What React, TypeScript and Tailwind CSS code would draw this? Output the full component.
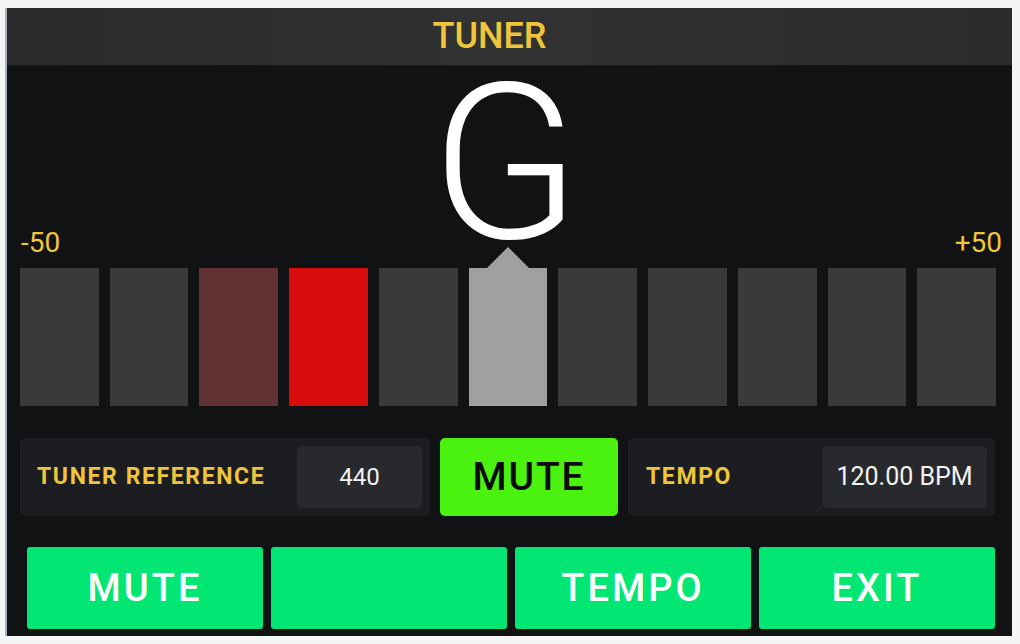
import React from "react";

const bars = [
  "bg-[#3a3a3c]",
  "bg-[#3a3a3c]",
  "bg-[#623133]",
  "bg-[#d90d0b]",
  "bg-[#3a3a3c]",
  "bg-[#a0a0a0]",
  "bg-[#3a3a3c]",
  "bg-[#3a3a3c]",
  "bg-[#3a3a3c]",
  "bg-[#3a3a3c]",
  "bg-[#3a3a3c]",
];

export default function App() {
  return (
    <div
      className="w-[1020px] h-[644px] bg-[#f4f5f7] overflow-hidden"
      style={{ fontFamily: "Roboto, 'Noto Sans', sans-serif" }}
    >
      <div className="ml-[5px] mt-[8px] w-[1007px] h-[628px] bg-[#111214] border-l-2 border-[#a9b3bf] flex flex-col">
        {/* Header */}
        <div className="h-[58px] shrink-0 flex items-center justify-center bg-gradient-to-r from-[#2a2a2a] via-[#323232] to-[#2b2b2b] border-b border-[#1a1a1a]">
          <span className="text-[36px] leading-none font-medium text-[#efc53c] mr-[40px] mt-[-1px]">
            TUNER
          </span>
        </div>

        {/* Note */}
        <div className="h-[163px] shrink-0 flex justify-center">
          <div className="text-[218px] leading-[0.75] h-[164px] font-light text-white mt-[16px] mr-[8px] relative z-10">
            G
          </div>
        </div>

        {/* Labels */}
        <div className="h-[27px] shrink-0 flex justify-between pl-[14px] pr-[10px] text-[28px] leading-none text-[#efc53c]">
          <span>-50</span>
          <span>+50</span>
        </div>

        {/* Bars */}
        <div className="mt-[12px] ml-[13px] w-[976px] h-[138px] grid grid-cols-11 gap-[11px]">
          {bars.map((c, i) => (
            <div key={i} className={`relative ${c}`}>
              {i === 5 && (
                <svg
                  className="absolute left-1/2 -translate-x-1/2 top-[-21px]"
                  width="44"
                  height="22"
                  viewBox="0 0 44 22"
                >
                  <polygon points="22,0 44,22 0,22" fill="#a0a0a0" />
                </svg>
              )}
            </div>
          ))}
        </div>

        {/* Controls row */}
        <div className="mt-[32px] ml-[13px] w-[975px] h-[78px] flex gap-[10px]">
          <div className="w-[410px] h-full rounded-[5px] bg-[#1c1d20] flex items-center justify-between pl-[17px] pr-[8px]">
            <span className="text-[23px] font-bold text-[#efc53c] tracking-[0.07em]">
              TUNER REFERENCE
            </span>
            <div className="w-[125px] h-[62px] rounded-[5px] bg-[#28292c] flex items-center justify-center text-[24px] text-[#f2f2f2]">
              440
            </div>
          </div>
          <div className="w-[178px] h-full rounded-[5px] bg-[#4cf20f] flex items-center justify-center">
            <span className="text-[39px] font-medium text-[#0b0b0b] tracking-[0.05em] leading-none">
              MUTE
            </span>
          </div>
          <div className="flex-1 h-full rounded-[5px] bg-[#1c1d20] flex items-center justify-between pl-[18px] pr-[8px]">
            <span className="text-[23px] font-bold text-[#efc53c] tracking-[0.07em]">
              TEMPO
            </span>
            <div className="w-[165px] h-[62px] rounded-[5px] bg-[#28292c] flex items-center justify-center text-[25px] text-[#f2f2f2]">
              120.00 BPM
            </div>
          </div>
        </div>

        {/* Bottom buttons */}
        <div className="mt-[31px] ml-[20px] w-[968px] h-[82px] grid grid-cols-4 gap-[8px]">
          {["MUTE", "", "TEMPO", "EXIT"].map((t, i) => (
            <div
              key={i}
              className="rounded-[3px] bg-[#02e673] flex items-center justify-center"
            >
              <span className="text-[38px] font-medium text-white tracking-[0.08em] leading-none">
                {t}
              </span>
            </div>
          ))}
        </div>
      </div>
    </div>
  );
}
